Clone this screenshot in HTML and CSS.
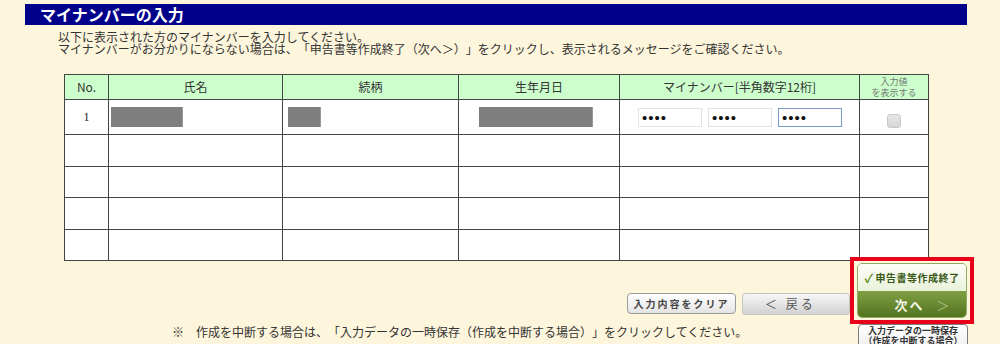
FILE: index.html
```html
<!DOCTYPE html>
<html lang="ja">
<head>
<meta charset="utf-8">
<title>マイナンバーの入力</title>
<link rel="stylesheet" href="styles.css">
</head>
<body>
<div class="page">
  <h1 class="title">マイナンバーの入力</h1>
  <div class="intro">
    <p>以下に表示された方のマイナンバーを入力してください。</p>
    <p>マイナンバーがお分かりにならない場合は、「申告書等作成終了（次へ＞）」をクリックし、表示されるメッセージをご確認ください。</p>
  </div>
  <table class="grid">
    <colgroup>
      <col class="c-no"><col class="c-name"><col class="c-rel"><col class="c-birth"><col class="c-num"><col class="c-show">
    </colgroup>
    <thead>
      <tr>
        <th>No.</th>
        <th>氏名</th>
        <th>続柄</th>
        <th>生年月日</th>
        <th>マイナンバー[半角数字12桁]</th>
        <th class="th-small">入力値<br>を表示する</th>
      </tr>
    </thead>
    <tbody>
      <tr class="r-first">
        <td class="num">1</td>
        <td><span class="mask mask-name"></span></td>
        <td><span class="mask mask-rel"></span></td>
        <td><span class="mask mask-birth"></span></td>
        <td>
          <div class="num-inputs">
            <input class="field" type="password" value="1234" readonly>
            <input class="field" type="password" value="5678" readonly>
            <input class="field field-focus" type="password" value="9012" readonly>
          </div>
        </td>
        <td class="center"><input class="check" type="checkbox"></td>
      </tr>
      <tr class="r-a"><td></td><td></td><td></td><td></td><td></td><td></td></tr>
      <tr class="r-b"><td></td><td></td><td></td><td></td><td></td><td></td></tr>
      <tr class="r-a"><td></td><td></td><td></td><td></td><td></td><td></td></tr>
      <tr class="r-b"><td></td><td></td><td></td><td></td><td></td><td></td></tr>
    </tbody>
  </table>
  <div class="footer">
    <div class="footer-left">
      <div class="btn-row">
        <button class="btn btn-clear">入力内容をクリア</button>
        <button class="btn btn-back">＜ 戻る</button>
      </div>
      <p class="note">※　作成を中断する場合は、「入力データの一時保存（作成を中断する場合）」をクリックしてください。</p>
    </div>
    <div class="footer-right">
      <div class="highlight">
        <button class="btn-next">
          <span class="next-top"><span class="tick">✓</span>申告書等作成終了</span>
          <span class="next-bottom">次へ<span class="chev">＞</span></span>
        </button>
      </div>
      <button class="btn btn-save"><span class="save-line">入力データの一時保存</span><span class="save-line">（作成を中断する場合）</span></button>
    </div>
  </div>
</div>
</body>
</html>
```

FILE: styles.css
```css
* { box-sizing: border-box; }

html, body {
  margin: 0;
  padding: 0;
  background: #fef6dc;
  font-family: "Noto Sans CJK JP", "Noto Sans", sans-serif;
  color: #222;
  overflow: hidden;
  text-spacing-trim: space-all;
}

.page {
  width: 1000px;
  height: 344px;
  padding-top: 4px;
}

.title {
  margin: 0 0 0 25px;
  width: 942px;
  height: 21px;
  background: #00008b;
  color: #fff;
  font-size: 16px;
  font-weight: bold;
  line-height: 21px;
  padding-left: 15px;
}

.intro {
  margin: 6px 0 0 58px;
  font-size: 12px;
  line-height: 12px;
  color: #333;
}

.intro p { margin: 0; }

.grid {
  margin: 19px 0 0 64px;
  width: 864px;
  border-collapse: collapse;
  table-layout: fixed;
  background: #fff;
}

.c-no { width: 44px; }
.c-name { width: 174px; }
.c-rel { width: 176px; }
.c-birth { width: 161px; }
.c-num { width: 240px; }
.c-show { width: 69px; }

.grid th,
.grid td {
  border: 1px solid #444;
  padding: 0;
}

.grid th {
  background: #ccffcc;
  height: 25px;
  font-size: 12px;
  font-weight: normal;
  color: #333;
  line-height: 14px;
}

.grid th.th-small {
  font-size: 9px;
  line-height: 11px;
  color: #777;
}

.r-first td { height: 35px; }
.r-a td { height: 32px; }
.r-b td { height: 31px; }

.grid td.num {
  text-align: center;
  font-family: "Liberation Serif", serif;
  font-size: 12px;
}

.grid td.center { text-align: center; }

.mask {
  display: block;
  height: 20px;
  background: #7f7f7f;
  border-right: 1px solid #999;
}

.mask-name { width: 72px; margin-left: 2px; }
.mask-rel { width: 33px; margin-left: 5px; }
.mask-birth { width: 114px; margin-left: 20px; }

.num-inputs {
  display: flex;
  gap: 6px;
  padding-left: 18px;
}

.field {
  width: 64px;
  height: 19px;
  margin: 0;
  border: 1px solid #e2e2e2;
  background: #fff;
  font-family: "Liberation Sans", sans-serif;
  font-size: 15px;
  letter-spacing: 1px;
  padding: 0 3px;
  color: #111;
  outline: none;
}

.field-focus {
  border: 1px solid #7a9ccc;
}

.check {
  appearance: none;
  -webkit-appearance: none;
  width: 14px;
  height: 14px;
  margin: 3px 0 0 0;
  border: 1px solid #c8c8c8;
  border-radius: 3px;
  background: linear-gradient(#e6e6e6, #d6d6d6);
  vertical-align: middle;
}

.footer {
  display: flex;
  align-items: flex-start;
}

.footer-left {
  width: 850px;
  padding-top: 32px;
}

.btn-row {
  display: flex;
  justify-content: flex-end;
  gap: 6px;
}

.btn {
  margin: 0;
  padding: 0;
  font-family: "Noto Sans CJK JP", sans-serif;
  cursor: pointer;
}

.btn-clear {
  width: 109px;
  height: 21px;
  border: 1px solid #9a9a9a;
  border-radius: 4px;
  background: linear-gradient(#ffffff, #e4e4e4);
  font-size: 10px;
  font-weight: bold;
  letter-spacing: 2px;
  color: #444;
  line-height: 19px;
}

.btn-back {
  width: 108px;
  height: 22px;
  border: 1px solid #c4c4c4;
  border-radius: 3px;
  background: linear-gradient(#f7f7f7, #d2d2d2);
  font-size: 12px;
  color: #555;
  letter-spacing: 3px;
  text-align: left;
  padding-left: 22px;
  line-height: 20px;
}

.note {
  margin: 11px 0 0 172px;
  font-size: 12px;
  line-height: 12px;
  color: #333;
  white-space: nowrap;
}

.footer-right {
  width: 124px;
  margin-top: -4px;
  position: relative;
  z-index: 1;
}

.highlight {
  border: 4px solid #e8001a;
  padding: 2px 3px;
  background: #fef6dc;
}

.btn-next {
  display: flex;
  flex-direction: column;
  width: 110px;
  height: 55px;
  margin: 0;
  padding: 0;
  border: 1px solid #91ab62;
  border-radius: 5px;
  overflow: hidden;
  background: #fff;
  font-family: "Noto Sans CJK JP", sans-serif;
}

.next-top {
  display: flex;
  align-items: center;
  justify-content: center;
  height: 27px;
  width: 100%;
  background: linear-gradient(#fdfef9, #e9f1da);
  font-size: 10px;
  font-weight: bold;
  letter-spacing: 0.5px;
  color: #3a5a18;
}

.tick {
  color: #5f8a24;
  font-size: 12px;
  margin-right: 2px;
}

.next-bottom {
  display: flex;
  align-items: center;
  justify-content: center;
  height: 26px;
  width: 100%;
  background: linear-gradient(#80a044, #53731f);
  color: #f3f7e6;
  font-size: 13px;
  font-weight: bold;
  letter-spacing: 2px;
  padding-left: 22px;
}

.chev {
  color: #a9c183;
  font-weight: normal;
  margin-left: 12px;
}

.btn-save {
  display: flex;
  flex-direction: column;
  align-items: center;
  width: 110px;
  height: 24px;
  margin: 0 0 0 8px;
  border: 1px solid #7d7d7d;
  border-radius: 4px;
  background: linear-gradient(#ffffff, #f0f0f0);
  font-size: 9px;
  font-weight: bold;
  color: #333;
  padding-top: 1px;
}

.save-line {
  display: block;
  height: 10px;
  line-height: 10px;
  white-space: nowrap;
}
```
